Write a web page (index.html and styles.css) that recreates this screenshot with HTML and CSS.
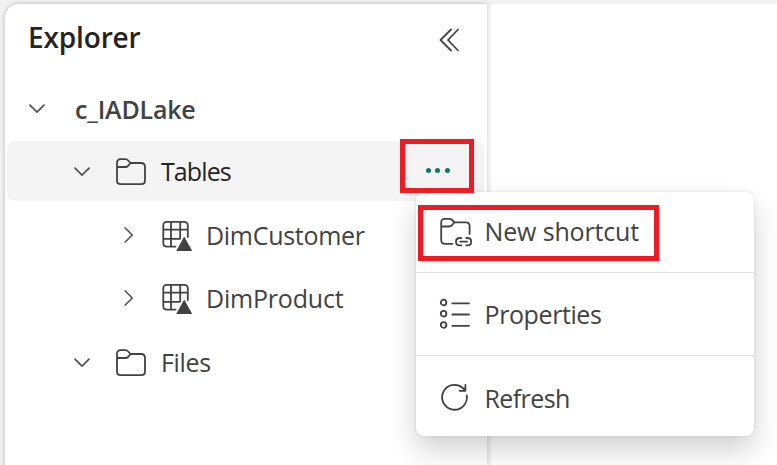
FILE: index.html
```
<!DOCTYPE html>
<html lang="en">
<head>
<meta charset="utf-8">
<title>Explorer</title>
<link rel="stylesheet" href="styles.css">
</head>
<body>
<svg class="defs" width="0" height="0" aria-hidden="true">
  <symbol id="down" viewBox="0 0 16 10"><path d="M1 1.2L8 8.2L15 1.2"/></symbol>
  <symbol id="right" viewBox="0 0 10 16"><path d="M1.2 1L8.2 8L1.2 15"/></symbol>
  <symbol id="folder" viewBox="0 0 32 28"><path d="M2 9V22.5Q2 26.2 5.7 26.2H26.3Q30 26.2 30 22.5V9Q30 5 26 5H15.5L13.2 2.5Q12 1.2 10.3 1.2H5.7Q2 1.2 2 5V9H10.5Q12 9 13 8L15.5 5"/></symbol>
  <symbol id="table" viewBox="0 0 32 32"><path d="M14.5 26.6H6Q2.3 26.6 2.3 23V5.5Q2.3 1.8 6 1.8H23Q26.8 1.8 26.8 5.5V17M2.3 9.7H26.8M2.3 18.8H18.5M10 1.8V26.6M19.2 1.8V18.5"/><path class="solid" d="M23.2 16.6L31.2 31H15.2Z"/></symbol>
</svg>
<aside class="panel">
  <header class="header">
    <h1 class="title">Explorer</h1>
    <svg class="icon collapse" width="20" height="24" viewBox="0 0 20 24"><path d="M12 1.5L1.5 12L12 22.5M19 1.5L9 12L19 22.5"/></svg>
  </header>
  <div class="tree">
    <div class="row root"><svg class="icon chevron" width="16" height="10"><use href="#down"/></svg><span class="label root-label">c_IADLake</span></div>
    <div class="row folder selected">
      <svg class="icon chevron" width="16" height="10"><use href="#down"/></svg><svg class="icon folder-icon" width="32" height="28"><use href="#folder"/></svg><span class="label tables">Tables</span>
      <button class="more" aria-label="More options"><i></i><i></i><i></i></button>
    </div>
    <div class="row leaf"><svg class="icon chevron" width="10" height="16"><use href="#right"/></svg><svg class="icon table-icon" width="32" height="32"><use href="#table"/></svg><span class="label customer">DimCustomer</span></div>
    <div class="row leaf last-leaf"><svg class="icon chevron" width="10" height="16"><use href="#right"/></svg><svg class="icon table-icon" width="32" height="32"><use href="#table"/></svg><span class="label product">DimProduct</span></div>
    <div class="row folder"><svg class="icon chevron" width="16" height="10"><use href="#down"/></svg><svg class="icon folder-icon" width="32" height="28"><use href="#folder"/></svg><span class="label files">Files</span></div>
  </div>
</aside>
<main class="content"></main>
<div class="menu">
  <div class="item highlighted"><svg class="icon" width="34" height="32" viewBox="0 0 34 32"><path d="M13.5 26.8H6Q2.2 26.8 2.2 23V5.5Q2.2 1.8 6 1.8H10Q12 1.8 13.2 3L15.5 5.3H27Q30.6 5.3 30.6 9.3V17M2.2 9.5H10Q12 9.5 13.2 8L15.5 5.3"/><path d="M22.3 21H21Q17 21 17 24.7Q17 28.4 21 28.4H22.3M27.3 21H28.3Q32.2 21 32.2 24.7Q32.2 28.4 28.3 28.4H27.3M21.3 24.7H28"/></svg><span class="label shortcut">New shortcut</span></div>
  <div class="item"><svg class="icon" width="34" height="32" viewBox="0 0 34 32"><circle cx="4.6" cy="4.5" r="2.8"/><circle cx="4.6" cy="15.7" r="2.8"/><circle cx="4.6" cy="27" r="2.8"/><path d="M13.3 5.3H30M13.3 16.5H30M13.3 27.8H30"/></svg><span class="label properties">Properties</span></div>
  <div class="item"><svg class="icon refresh-icon" width="34" height="32" viewBox="0 0 34 32"><path d="M27.8 12.5A12.4 12.4 0 1 1 23.7 5L26 7M26.4 2V7.8H20.6"/></svg><span class="label refresh">Refresh</span></div>
</div>
</body>
</html>
```
FILE: styles.css
```
* { box-sizing: border-box; }
body {
  margin: 0; width: 777px; height: 465px; overflow: hidden;
  display: flex; padding: 4px 0 0 5px; background: #f1f1f1;
  font-family: "Open Sans", "Noto Sans", sans-serif; color: #424242;
  position: relative;
}
.defs { position: absolute; }
.panel {
  width: 482px; height: 480px; flex: none; background: #fff;
  border-radius: 14px 0 0 0; box-shadow: 0 0 4px rgba(0,0,0,.25);
}
.content { flex: 1; height: 480px; background: #fff; box-shadow: inset 4px 0 4px -2px rgba(0,0,0,.13); }
.header { height: 69px; display: flex; align-items: center; justify-content: space-between; padding: 0 28.5px 0 23px; }
.title { margin: -3px 0 0; color: #242424; font-size: 28px; line-height: 38px; font-weight: 600; letter-spacing: -.15px; }
.icon { flex: none; display: block; fill: none; stroke: #424242; stroke-width: 1.8; stroke-linecap: round; stroke-linejoin: round; overflow: visible; }
.solid { fill: #424242; stroke: none; }
.collapse { margin-top: 2px; }
.tree { display: flex; flex-direction: column; gap: 4px; padding: 4px 3px 0 2px; }
.row { height: 60px; flex: none; display: flex; align-items: center; border-radius: 8px; }
.last-leaf { margin-top: -1px; }
.root { padding-left: 22px; }
.folder { padding-left: 67px; }
.leaf { padding-left: 117px; }
.selected { background: #f4f4f4; color: #242424; }
.chevron { stroke: #555; stroke-width: 1.7; margin-top: 2px; }
.root .chevron { margin-top: 4px; }
.leaf .chevron { margin-top: 0; }
.folder-icon { margin: 2px 0 0 25px; }
.table-icon { margin: 2px 0 0 27px; }
.label { white-space: nowrap; font-size: 25px; line-height: 34px; }
.root-label { margin: 4px 0 0 30px; font-weight: 600; letter-spacing: -.2px; }
.tables, .files { margin: 0 0 0 14px; }
.tables { letter-spacing: -.9px; }
.files { letter-spacing: -.3px; }
.customer, .product { margin: 0 0 0 13px; letter-spacing: -.3px; }
.product { letter-spacing: -.2px; }
.more {
  width: 74px; height: 54px; margin: 0 10px 10px auto; padding: 9px 0 0 1px;
  border: 5px solid #ed1c24; background: transparent;
  display: flex; gap: 4.5px; justify-content: center; align-items: center;
  position: relative; z-index: 1;
}
.more i { width: 5px; height: 5px; border-radius: 50%; background: #117865; }
.menu {
  position: absolute; left: 416px; top: 192px; width: 338px; height: 244px;
  background: #fff; border-radius: 8px;
  box-shadow: 0 0 3px rgba(0,0,0,.12), 0 14px 28px rgba(0,0,0,.18);
  display: grid; grid-template-rows: 80px 83px 81px;
}
.item { display: flex; align-items: center; padding-left: 23px; }
.item + .item { border-top: 1px solid #e0e0e0; }
.highlighted { height: 56px; width: 241px; margin: 13px 0 0 2px; padding-left: 16px; border: 5px solid #ed1c24; }
.item .label { margin: 0 0 0 11.5px; }
.item .shortcut { margin-top: -4px; letter-spacing: -.15px; }
.item .properties { letter-spacing: -.4px; }
.item .refresh { margin-top: 4px; letter-spacing: -.6px; }
.refresh-icon { margin-top: 5px; }
```
